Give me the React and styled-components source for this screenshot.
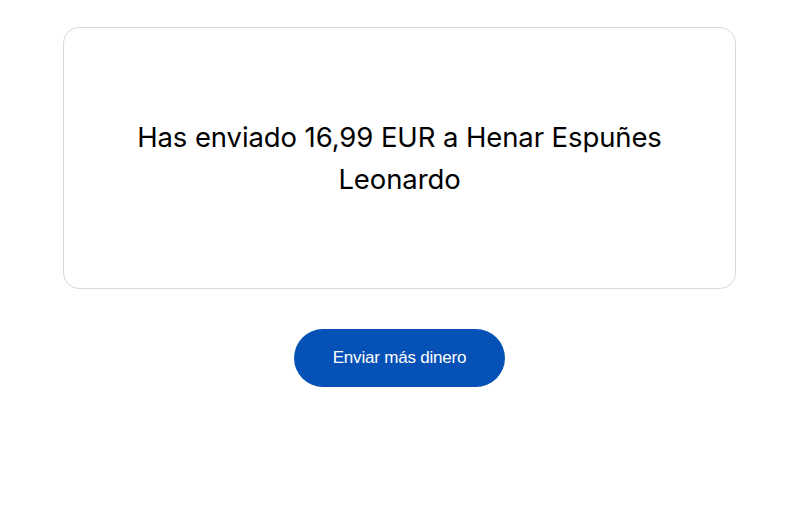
import React from "react";
import styled, { createGlobalStyle } from "styled-components";

const Global = createGlobalStyle`
  html, body { margin: 0; padding: 0; background: #fff; }
  body { font-family: "Inter", "Liberation Sans", sans-serif; }
`;

const Page = styled.main`
  display: flex;
  flex-direction: column;
  align-items: center;
  padding: 27px 64px 0 63px;
  gap: 40px;
`;

const Card = styled.section`
  box-sizing: border-box;
  width: 100%;
  height: 262px;
  border: 1px solid #d9d9d9;
  border-radius: 16px;
  display: flex;
  align-items: center;
  justify-content: center;
  padding: 0 50px;
`;

const Message = styled.h1`
  margin: 0;
  font-family: "Inter", "Liberation Sans", sans-serif;
  font-weight: 400;
  font-size: 27.5px;
  line-height: 42px;
  letter-spacing: -0.1px;
  color: #000;
  text-align: center;
  max-width: 560px;
`;

const PrimaryButton = styled.button`
  width: 211px;
  height: 58px;
  border: none;
  border-radius: 29px;
  background: #0551b5;
  color: #fff;
  font-family: "Liberation Sans", Arial, sans-serif;
  font-size: 17px;
  letter-spacing: -0.2px;
  cursor: pointer;
`;

export default function App() {
  return (
    <>
      <Global />
      <Page>
        <Card>
          <Message>Has enviado 16,99 EUR a Henar Espuñes Leonardo</Message>
        </Card>
        <PrimaryButton>Enviar más dinero</PrimaryButton>
      </Page>
    </>
  );
}
